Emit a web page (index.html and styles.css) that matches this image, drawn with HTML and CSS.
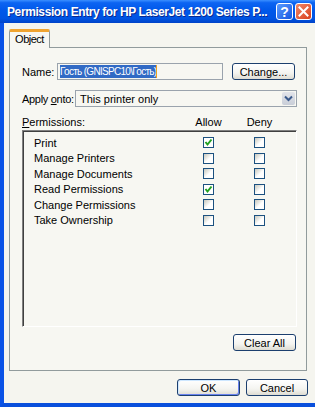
FILE: index.html
```html
<!DOCTYPE html>
<html lang="en">
  <head>
    <meta charset="UTF-8" />
    <title>Permission Entry</title>
    <link rel="stylesheet" href="styles.css">
  </head>
  <body>
    <div class="window">
      <div class="titlebar">
        <span class="title">Permission Entry for HP LaserJet 1200 Series P...</span>
        <div class="caption-buttons">
          <span class="cap-btn help">?</span>
          <span class="cap-btn close">
            <svg width="11" height="11" viewBox="0 0 11 11">
              <path d="M1.5 1.5 L9.5 9.5 M9.5 1.5 L1.5 9.5" stroke="#fff" stroke-width="2" stroke-linecap="square" />
            </svg>
          </span>
        </div>
      </div>

      <div class="frame">
        <div class="tabs">
          <div class="tab active">Object</div>
        </div>

        <div class="panel">
          <div class="form-row">
            <span class="label name-label">Name:</span>
            <div class="field">
              <span class="selected">Гость (GNISPC10\Гость)</span><span class="caret"></span>
            </div>
            <button class="btn">Change...</button>
          </div>

          <div class="form-row apply-row">
            <span class="label apply-label">Apply <u>o</u>nto:</span>
            <div class="combo">
              <span class="combo-text">This printer only</span>
              <span class="combo-btn">
                <svg width="9" height="7" viewBox="0 0 9 7">
                  <path d="M1 1.5 L4.5 5 L8 1.5" fill="none" stroke="#3b5a8c" stroke-width="2" />
                </svg>
              </span>
            </div>
          </div>

          <div class="perm-head">
            <span><u>P</u>ermissions:</span>
            <span class="col">Allow</span>
            <span class="col">Deny</span>
          </div>

          <div class="perm-list">
            <div class="perm-row">
              <span>Print</span>
              <span class="col"><span class="check checked"></span></span>
              <span class="col"><span class="check"></span></span>
            </div>
            <div class="perm-row">
              <span>Manage Printers</span>
              <span class="col"><span class="check"></span></span>
              <span class="col"><span class="check"></span></span>
            </div>
            <div class="perm-row">
              <span>Manage Documents</span>
              <span class="col"><span class="check"></span></span>
              <span class="col"><span class="check"></span></span>
            </div>
            <div class="perm-row">
              <span>Read Permissions</span>
              <span class="col"><span class="check checked"></span></span>
              <span class="col"><span class="check"></span></span>
            </div>
            <div class="perm-row">
              <span>Change Permissions</span>
              <span class="col"><span class="check"></span></span>
              <span class="col"><span class="check"></span></span>
            </div>
            <div class="perm-row">
              <span>Take Ownership</span>
              <span class="col"><span class="check"></span></span>
              <span class="col"><span class="check"></span></span>
            </div>
          </div>

          <div class="clear-row">
            <button class="btn">Clear All</button>
          </div>
        </div>

        <div class="dialog-buttons">
          <button class="btn default">OK</button>
          <button class="btn cancel">Cancel</button>
        </div>
      </div>
    </div>
  </body>
</html>
```

FILE: styles.css
```css
body {
  margin: 0;
  font-family: "Liberation Sans", Arial, sans-serif;
  font-size: 11px;
  color: #000;
  background: #f5f5ef;
}

.window {
  width: 315px;
  height: 407px;
  display: flex;
  flex-direction: column;
  overflow: hidden;
}

/* caption */

.titlebar {
  height: 23px;
  flex: none;
  display: flex;
  align-items: center;
  padding-left: 7px;
  background: linear-gradient(to bottom, #3b8fff 0%, #0c64f2 12%, #0058ea 45%, #0054e3 80%, #0043c8 100%);
}

.title {
  flex: 1;
  min-width: 0;
  overflow: hidden;
  color: #fff;
  font-weight: bold;
  font-size: 12px;
  letter-spacing: -0.4px;
  white-space: nowrap;
  text-shadow: 1px 1px 0 #0a2a8f;
}

.caption-buttons {
  flex: none;
  display: flex;
  gap: 2px;
  margin-right: 3px;
}

.cap-btn {
  width: 17px;
  height: 17px;
  box-sizing: border-box;
  border: 1px solid #fff;
  border-radius: 3px;
  display: flex;
  align-items: center;
  justify-content: center;
}

.help {
  background: linear-gradient(135deg, #5a9bff, #1757e0);
  color: #fff;
  font-weight: bold;
  font-size: 14px;
}

.close {
  background: linear-gradient(135deg, #f0876a, #d9401c);
}

/* window body */

.frame {
  flex: 1;
  display: flex;
  flex-direction: column;
  padding: 6px 0 0 5px;
  border-left: 4px solid #0a52e6;
  border-bottom: 4px solid #0a4fdc;
  background: #f5f5ef;
}

.tabs {
  display: flex;
  position: relative;
  z-index: 1;
}

.tab {
  width: 41px;
  height: 19px;
  box-sizing: border-box;
  margin-bottom: -1px;
  border: 1px solid #919b9c;
  border-top: 3px solid #f0a430;
  border-bottom: none;
  border-radius: 2px 2px 0 0;
  background: #f7f7f2;
  text-align: center;
  line-height: 15px;
  letter-spacing: -0.5px;
}

.panel {
  width: 298px;
  height: 324px;
  box-sizing: border-box;
  border: 1px solid #919b9c;
  padding: 15px 9px 0 12px;
  background: #f7f7f2;
  display: flex;
  flex-direction: column;
}

.form-row {
  display: flex;
  align-items: center;
  height: 17px;
}

.apply-row {
  margin-top: 10px;
}

.label {
  white-space: nowrap;
}

.name-label {
  width: 35px;
}

.apply-label {
  flex: 1;
  letter-spacing: -0.3px;
}

.field {
  width: 166px;
  height: 17px;
  box-sizing: border-box;
  border: 1px solid #9aa3ad;
  background: #f7f7f2;
  padding: 1px 2px;
  display: flex;
  align-items: center;
  margin-right: 9px;
}

.selected {
  background: #316ac5;
  color: #fff;
  font-size: 10px;
  letter-spacing: -0.7px;
  line-height: 13px;
  white-space: nowrap;
}

.caret {
  width: 1px;
  height: 13px;
  background: #f0a020;
}

.combo {
  width: 222px;
  flex: none;
  height: 17px;
  box-sizing: border-box;
  border: 1px solid #9aa3ad;
  background: #f7f7f2;
  display: flex;
  align-items: center;
  justify-content: space-between;
  padding: 0 1px 0 4px;
}

.combo-btn {
  width: 13px;
  height: 13px;
  border-radius: 2px;
  background: linear-gradient(to bottom, #e2e4ea, #c9ced8);
  display: flex;
  align-items: center;
  justify-content: center;
}

.btn {
  width: 63px;
  height: 17px;
  padding: 0;
  box-sizing: border-box;
  border: 1px solid #1c3f6e;
  border-radius: 3px;
  background: linear-gradient(to bottom, #ffffff 0%, #f4f4f0 60%, #dedcd2 100%);
  font: inherit;
  color: #000;
}

/* permissions */

.perm-head,
.perm-row {
  display: grid;
  grid-template-columns: 1fr 51px 51px;
  align-items: center;
}

.perm-head {
  margin-top: 9px;
  height: 12px;
  margin-bottom: 2px;
  padding-right: 12px;
}

.col {
  display: flex;
  justify-content: center;
}

.perm-list {
  height: 197px;
  box-sizing: border-box;
  border: 1px solid;
  border-color: #808080 #ffffff #ffffff #808080;
  box-shadow: inset 1px 1px 0 #404040;
  padding: 4px 11px 0 11px;
}

.perm-row {
  height: 15.5px;
}

.check {
  width: 11px;
  height: 11px;
  box-sizing: border-box;
  border: 1px solid #1c5180;
  background: linear-gradient(135deg, #c8c8c0 0%, #e4e4de 30%, #ffffff 55%);
}

.check.checked {
  background: #fff url("data:image/svg+xml;utf8,<svg xmlns='http://www.w3.org/2000/svg' width='9' height='9'><path d='M1.5 4 L3.5 6.5 L7.5 1.5' fill='none' stroke='%2321a121' stroke-width='2'/></svg>") no-repeat center;
}

.clear-row {
  display: flex;
  justify-content: flex-end;
  margin-top: 7px;
  padding-right: 1px;
}

.dialog-buttons {
  width: 299px;
  display: flex;
  justify-content: flex-end;
  gap: 6px;
  margin-top: 8px;
}

.btn.cancel {
  width: 62px;
}

.btn.default {
  box-shadow: inset 1px 1px 0 #cee7ff, inset -1px -1px 0 #6982ee;
}
```
